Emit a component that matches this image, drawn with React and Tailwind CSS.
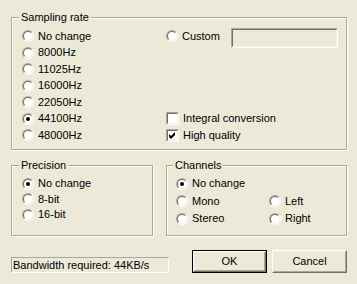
const Radio = ({ checked }) => (
  <div className="w-[12px] h-[12px] shrink-0 rounded-full border border-t-[#ACA899] border-l-[#ACA899] border-r-white border-b-white">
    <div className="w-full h-full rounded-full border border-t-[#716F64] border-l-[#716F64] border-r-[#F1EFE2] border-b-[#F1EFE2] bg-white flex items-center justify-center">
      {checked && <div className="w-[4px] h-[4px] rounded-full bg-black" />}
    </div>
  </div>
);

const Check = ({ checked }) => (
  <div className="w-[13px] h-[13px] shrink-0 border border-t-[#ACA899] border-l-[#ACA899] border-r-white border-b-white">
    <div className="w-full h-full border border-t-[#716F64] border-l-[#716F64] border-r-[#F1EFE2] border-b-[#F1EFE2] bg-white flex items-center justify-center">
      {checked && (
        <svg width="7" height="7" viewBox="0 0 7 7">
          <path d="M0 2 L2 4 L6 0 L6 3 L2 7 L0 5 Z" fill="#000" />
        </svg>
      )}
    </div>
  </div>
);

const Option = ({ label, checked, className = "" }) => (
  <div className={`flex items-center gap-[4px] ${className}`}>
    <Radio checked={checked} />
    <span>{label}</span>
  </div>
);

const Group = ({ title, labelLeft, className, children }) => (
  <div
    className={`relative border border-[#ACA899] shadow-[1px_1px_0_#fff,inset_1px_1px_0_#fff] ${className}`}
  >
    <span className={`absolute -top-[7px] ${labelLeft} px-[2px] bg-[#ECE9D8] leading-[13px]`}>
      {title}
    </span>
    {children}
  </div>
);

const Button = ({ label, primary }) => (
  <div className={primary ? "border border-black" : ""}>
    <div
      className={`${
        primary ? "w-[73px] h-[21px]" : "w-[75px] h-[23px]"
      } border border-t-white border-l-white border-r-[#716F64] border-b-[#716F64]`}
    >
      <div className="w-full h-full border border-t-[#ECE9D8] border-l-[#ECE9D8] border-r-[#ACA899] border-b-[#ACA899] flex items-center justify-center">
        {label}
      </div>
    </div>
  </div>
);

const rates = ["No change", "8000Hz", "11025Hz", "16000Hz", "22050Hz", "44100Hz", "48000Hz"];

export default function App() {
  return (
    <div
      className="w-[357px] h-[284px] bg-[#ECE9D8] text-black text-[11px] leading-[13px] pl-[11px] pt-[17px] select-none"
      style={{ fontFamily: '"Liberation Sans", Arial, sans-serif' }}
    >
      <div className="w-[336px]">
        <Group title="Sampling rate" labelLeft="left-[7px]" className="h-[133px] pt-[10px] pl-[10px]">
          <div className="grid grid-cols-[144px_1fr] auto-rows-[16.5px]">
            {rates.map((r, i) => (
              <div key={r} style={{ gridRow: i + 1 }} className="col-start-1 flex items-center">
                <Option label={r} checked={r === "44100Hz"} />
              </div>
            ))}
            <div className="col-start-2 row-start-1 flex items-start">
              <Option label="Custom" className="w-[65px] h-[16.5px]" />
              <div className="w-[107px] h-[20px] border border-t-[#ACA899] border-l-[#ACA899] border-r-white border-b-white">
                <div className="w-full h-full border border-t-[#716F64] border-l-[#716F64] border-r-[#F1EFE2] border-b-[#F1EFE2]" />
              </div>
            </div>
            <div className="col-start-2 row-start-6 flex items-center gap-[4px]">
              <Check />
              <span>Integral conversion</span>
            </div>
            <div className="col-start-2 row-start-7 flex items-center gap-[4px]">
              <Check checked />
              <span>High quality</span>
            </div>
          </div>
        </Group>

        <div className="flex gap-[13px] mt-[15px]">
          <Group title="Precision" labelLeft="left-[7px]" className="w-[142px] h-[71px] pt-[10px] pl-[10px]">
            <div className="flex flex-col">
              <Option label="No change" checked className="h-[15.5px]" />
              <Option label="8-bit" className="h-[15.5px]" />
              <Option label="16-bit" className="h-[15.5px]" />
            </div>
          </Group>
          <Group title="Channels" labelLeft="left-[6px]" className="w-[181px] h-[71px] pt-[9px] pl-[9px]">
            <div className="grid grid-cols-[93px_1fr] auto-rows-[17.5px]">
              <Option label="No change" checked className="col-span-2" />
              <Option label="Mono" />
              <Option label="Left" />
              <Option label="Stereo" />
              <Option label="Right" />
            </div>
          </Group>
        </div>

        <div className="flex items-end mt-[14px]">
          <div className="w-[158px] h-[16px] border border-t-[#ACA899] border-l-[#ACA899] border-r-white border-b-white pl-[1px] flex items-center">
            Bandwidth required: 44KB/s
          </div>
          <div className="ml-auto flex gap-[5px]">
            <Button label="OK" primary />
            <Button label="Cancel" />
          </div>
        </div>
      </div>
    </div>
  );
}
